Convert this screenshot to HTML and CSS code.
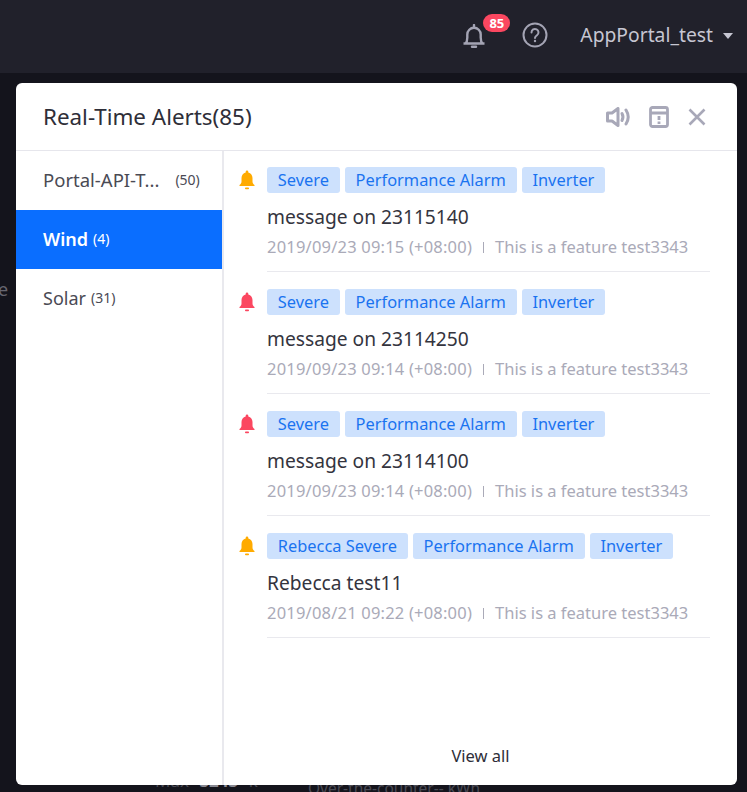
FILE: index.html
```html
<!DOCTYPE html>
<html lang="en">
<head>
    <meta charset="UTF-8">
    <meta name="viewport" content="width=device-width, initial-scale=1.0">
    <title>Real-Time Alerts</title>
    <link rel="stylesheet" href="styles.css">
</head>
<body>
    <header class="topbar">
        <div class="notify">
            <svg class="notify-bell" viewBox="0 0 24 24" width="24" height="24" fill="none" stroke="#a4a4b4" stroke-width="2.400" stroke-linejoin="round">
                <path d="M1.500 19.500h21M3.500 19.500c1.500-1.500 1.800-3.500 1.800-6v-3a6.700 6.700 0 0 1 13.400 0v3c0 2.500.3 4.500 1.800 6"/>
                <path d="M10 22.800h4" stroke-linecap="round"/>
                <path d="M12 1v2.500" stroke-linecap="round"/>
            </svg>
            <span class="notify-badge">85</span>
        </div>
        <svg class="help" viewBox="0 0 26 26" width="26" height="26" fill="none" stroke="#a4a4b4" stroke-width="2">
            <circle cx="13" cy="13" r="11.500"/>
            <path d="M9.500 10.500a3.500 3.500 0 1 1 5.500 2.800c-1.300.9-2 1.400-2 2.700" stroke-linecap="round"/>
            <circle cx="13" cy="19" r="1.200" fill="#a4a4b4" stroke="none"/>
        </svg>
        <div class="user">AppPortal_test</div>
        <span class="caret"></span>
    </header>

    <div class="behind behind-left">e |</div>
    <div class="behind behind-max">Max <b>3243</b> k</div>
    <div class="behind behind-bottom">Over-the-counter-- kWh</div>

    <section class="panel">
        <div class="panel-head">
            <h1>Real-Time Alerts(85)</h1>
            <div class="panel-tools">
                <svg viewBox="0 0 24 20" width="24" height="20" fill="none" stroke="#a8a8b8" stroke-width="3" stroke-linejoin="round" stroke-linecap="round">
                    <path d="M1.500 6h4.500l6-4.500v17l-6-4.500H1.500z"/>
                    <path d="M16 6.500c1.200 2.200 1.200 4.800 0 7"/>
                    <path d="M20 3c2.800 4.400 2.800 9.600 0 14"/>
                </svg>
                <svg viewBox="0 0 20 22" width="20" height="22" fill="none" stroke="#a8a8b8" stroke-width="2.800">
                    <rect x="1.500" y="1.500" width="17" height="19" rx="2"/>
                    <path d="M1.500 7h17"/>
                    <path d="M10 10v4M10 15.500v2.500"/>
                </svg>
                <svg viewBox="0 0 18 18" width="18" height="18" fill="none" stroke="#a8a8b8" stroke-width="2.600">
                    <path d="M1.500 1.500l15 15M16.500 1.500l-15 15"/>
                </svg>
            </div>
        </div>
        <div class="panel-body">
            <nav class="groups">
                <div class="group">
                    <span class="group-name group-long">Portal-API-T...</span>
                    <span class="group-count">(50)</span>
                </div>
                <div class="group group-active">
                    <span class="group-name">Wind</span>
                    <span class="group-count">(4)</span>
                </div>
                <div class="group">
                    <span class="group-name">Solar</span>
                    <span class="group-count">(31)</span>
                </div>
            </nav>
            <div class="alerts">
                <div class="alert-list">
                    <div class="alert">
                        <svg class="alert-bell" viewBox="0 0 18 20" width="18" height="20" fill="#ffab00"><path d="M9 0.500c.8 0 1.300.6 1.300 1.300v.6c2.600.6 4.200 2.800 4.200 5.600v3.500c0 1.400.5 2.300 2 3.600v1H1.500v-1c1.500-1.300 2-2.200 2-3.600V8c0-2.800 1.600-5 4.200-5.600v-.6C7.700 1.100 8.200.5 9 .5z"/><rect x="7" y="17.500" width="4" height="1.700" rx=".8"/></svg>
                        <div class="alert-main">
                            <div class="tags"><span class="tag">Severe</span><span class="tag">Performance Alarm</span><span class="tag">Inverter</span></div>
                            <div class="alert-title">message on 23115140</div>
                            <div class="alert-meta"><span class="alert-date">2019/09/23 09:15 (+08:00)</span><i></i><span>This is a feature test3343</span></div>
                        </div>
                    </div>
                    <div class="alert">
                        <svg class="alert-bell" viewBox="0 0 18 20" width="18" height="20" fill="#fb4760"><path d="M9 0.500c.8 0 1.300.6 1.300 1.300v.6c2.600.6 4.200 2.800 4.200 5.600v3.500c0 1.400.5 2.300 2 3.600v1H1.500v-1c1.500-1.300 2-2.200 2-3.600V8c0-2.800 1.600-5 4.200-5.600v-.6C7.700 1.100 8.200.5 9 .5z"/><rect x="7" y="17.500" width="4" height="1.700" rx=".8"/></svg>
                        <div class="alert-main">
                            <div class="tags"><span class="tag">Severe</span><span class="tag">Performance Alarm</span><span class="tag">Inverter</span></div>
                            <div class="alert-title">message on 23114250</div>
                            <div class="alert-meta"><span class="alert-date">2019/09/23 09:14 (+08:00)</span><i></i><span>This is a feature test3343</span></div>
                        </div>
                    </div>
                    <div class="alert">
                        <svg class="alert-bell" viewBox="0 0 18 20" width="18" height="20" fill="#fb4760"><path d="M9 0.500c.8 0 1.300.6 1.300 1.300v.6c2.600.6 4.200 2.800 4.200 5.600v3.500c0 1.400.5 2.300 2 3.600v1H1.500v-1c1.500-1.300 2-2.200 2-3.600V8c0-2.800 1.600-5 4.200-5.600v-.6C7.700 1.100 8.200.5 9 .5z"/><rect x="7" y="17.500" width="4" height="1.700" rx=".8"/></svg>
                        <div class="alert-main">
                            <div class="tags"><span class="tag">Severe</span><span class="tag">Performance Alarm</span><span class="tag">Inverter</span></div>
                            <div class="alert-title">message on 23114100</div>
                            <div class="alert-meta"><span class="alert-date">2019/09/23 09:14 (+08:00)</span><i></i><span>This is a feature test3343</span></div>
                        </div>
                    </div>
                    <div class="alert">
                        <svg class="alert-bell" viewBox="0 0 18 20" width="18" height="20" fill="#ffab00"><path d="M9 0.500c.8 0 1.300.6 1.300 1.300v.6c2.600.6 4.200 2.800 4.200 5.600v3.500c0 1.400.5 2.300 2 3.600v1H1.500v-1c1.500-1.300 2-2.200 2-3.600V8c0-2.800 1.600-5 4.200-5.600v-.6C7.700 1.100 8.200.5 9 .5z"/><rect x="7" y="17.500" width="4" height="1.700" rx=".8"/></svg>
                        <div class="alert-main">
                            <div class="tags"><span class="tag">Rebecca Severe</span><span class="tag">Performance Alarm</span><span class="tag">Inverter</span></div>
                            <div class="alert-title">Rebecca test11</div>
                            <div class="alert-meta"><span class="alert-date">2019/08/21 09:22 (+08:00)</span><i></i><span>This is a feature test3343</span></div>
                        </div>
                    </div>
                </div>
                <div class="view-all">View all</div>
            </div>
        </div>
    </section>
</body>
</html>
```

FILE: styles.css
```css
html, body {
    height: 100%;
}
body {
    font-family: "Noto Sans", Inter, sans-serif;
    margin: 0;
    padding: 0;
    background-color: #14141c;
    overflow: hidden;
    position: relative;
}
.topbar {
    height: 73px;
    background-color: #21212b;
    display: flex;
    align-items: center;
    justify-content: flex-end;
    box-sizing: border-box;
    padding: 0 13px 4px 0;
    color: #c6c6d2;
}
.notify {
    position: relative;
    width: 24px;
    height: 24px;
    margin: 2px 36px 0 0;
}
.notify-badge {
    position: absolute;
    left: 21px;
    top: -10px;
    min-width: 27px;
    height: 18px;
    line-height: 18px;
    border-radius: 9px;
    background-color: #fb4760;
    color: #fff;
    font-size: 13px;
    font-weight: 700;
    text-align: center;
}
.help {
    margin-right: 32px;
}
.user {
    font-size: 19.300px;
}
.caret {
    width: 0;
    height: 0;
    border-left: 5.500px solid transparent;
    border-right: 5.500px solid transparent;
    border-top: 6px solid #c6c6d2;
    margin: 3px 1px 0 10px;
}
.behind {
    position: absolute;
    color: #4a4a54;
    font-size: 18px;
}
.behind b {
    color: #8a8a94;
    margin: 0 6px;
}
.behind-left {
    left: -2px;
    top: 277px;
    color: #666670;
}
.behind-max {
    left: 155px;
    top: 769px;
    font-size: 17px;
}
.behind-bottom {
    left: 308px;
    top: 777px;
    font-size: 15.500px;
}
.panel {
    position: absolute;
    left: 16px;
    top: 83px;
    width: 721px;
    height: 702px;
    background: #fff;
    border-radius: 6px;
    display: flex;
    flex-direction: column;
    overflow: hidden;
}
.panel-head {
    height: 68px;
    flex-shrink: 0;
    box-sizing: border-box;
    border-bottom: 1px solid #e6e6ec;
    display: flex;
    align-items: center;
    justify-content: space-between;
    padding: 0 31px 0 27px;
}
.panel-head h1 {
    margin: 0;
    font-size: 22.400px;
    font-weight: 400;
    color: #2e2e38;
}
.panel-tools {
    display: flex;
    align-items: center;
    gap: 19px;
}
.panel-body {
    flex: 1;
    display: flex;
    min-height: 0;
}
.groups {
    width: 208px;
    flex-shrink: 0;
    box-sizing: border-box;
    border-right: 2px solid #e9e9ee;
}
.group {
    height: 59px;
    width: 206px;
    display: flex;
    align-items: center;
    padding: 0 0 2px 27px;
    box-sizing: border-box;
    color: #4a4a54;
}
.group-name {
    font-size: 18px;
}
.group-long {
    font-size: 18.500px;
    margin-right: 11px;
}
.group-count {
    font-size: 14px;
    margin-left: 5px;
}
.group-active {
    background-color: #0a6eff;
    color: #fff;
}
.group-active .group-name {
    font-weight: 600;
}
.alerts {
    flex: 1;
    display: flex;
    flex-direction: column;
    padding-top: 16px;
    min-width: 0;
}
.alert-list {
    flex: 1;
    padding: 0 27px 0 14px;
}
.alert {
    display: flex;
    height: 122px;
}
.alert-bell {
    flex-shrink: 0;
    margin: 3px 11px 0 0;
}
.alert-main {
    flex: 1;
    height: 104px;
    border-bottom: 1px solid #e9e9ee;
}
.tags {
    display: flex;
    gap: 5px;
}
.tag {
    height: 26px;
    line-height: 26px;
    padding: 0 10.800px;
    background-color: #cde1fd;
    color: #1a73f0;
    border-radius: 3px;
    font-size: 16.400px;
}
.alert-title {
    margin-top: 10px;
    height: 27px;
    line-height: 27px;
    font-size: 19.200px;
    color: #34343e;
}
.alert-meta {
    margin-top: 5px;
    line-height: 24px;
    font-size: 16.500px;
    color: #aaaab8;
    display: flex;
    align-items: center;
}
.alert-date {
    letter-spacing: 0.2px;
}
.alert-meta i {
    width: 1px;
    height: 11px;
    margin: 1px 11px 0;
    background-color: #aaaab8;
}
.view-all {
    height: 44px;
    text-align: center;
    font-size: 16.500px;
    color: #2e2e38;
    line-height: 30px;
    flex-shrink: 0;
}
```
